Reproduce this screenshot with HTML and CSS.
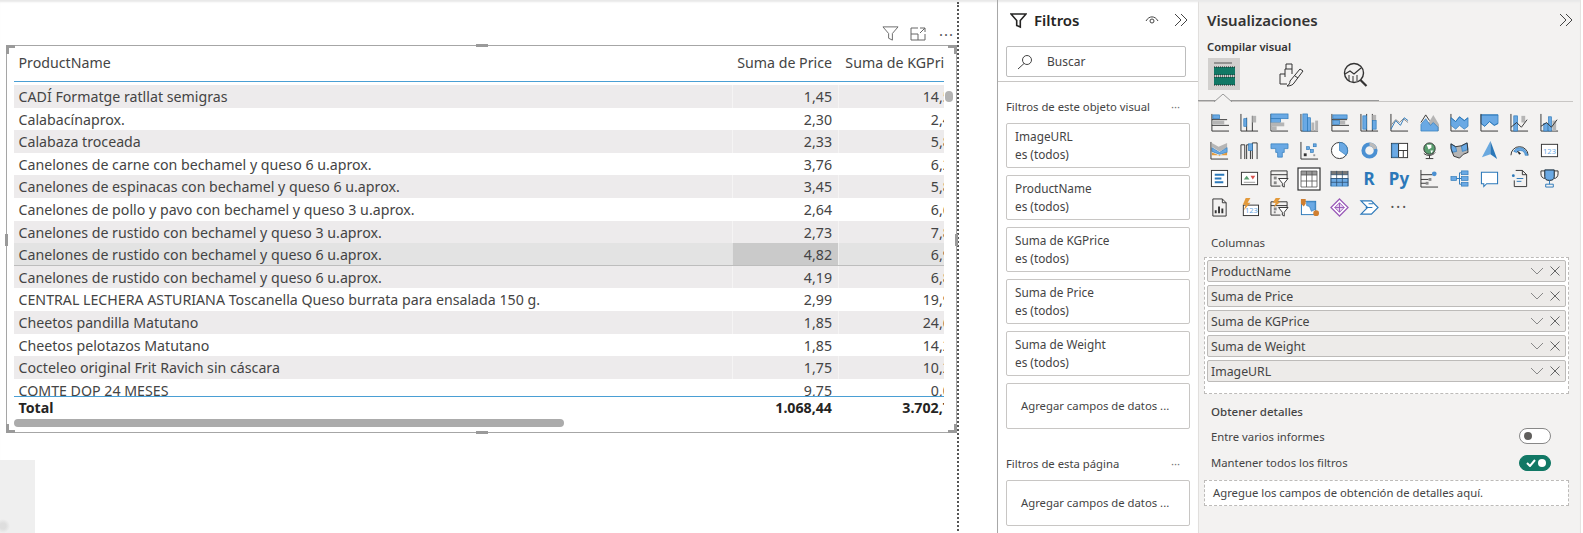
FILE: index.html
```html
<!DOCTYPE html>
<html lang="en">
<head>
  <meta charset="UTF-8" />
  <title>Power BI</title>
  <link rel="stylesheet" href="styles.css">
</head>
<body>

  <main class="canvas">
    <div class="page">
      <div class="visual-tools">
        <svg width="17" height="17" viewBox="0 0 18 18" fill="none" stroke="#666"><path d="M1 2h16l-6 7v7l-4-2V9z"/></svg>
        <svg width="16" height="14" viewBox="0 0 16 14" fill="none" stroke="#666"><path d="M8 1H1v12h14V7M1 7h7v6M10 1h5v4M15 1l-5 5"/></svg>
        <span class="tool-dots">···</span>
      </div>

      <div class="visual">
        <span class="handle corner-tl"></span>
        <span class="handle corner-tr"></span>
        <span class="handle corner-bl"></span>
        <span class="handle corner-br"></span>
        <span class="handle mid-top"></span>
        <span class="handle mid-bottom"></span>
        <span class="handle mid-left"></span>
        <span class="handle mid-right"></span>

        <div class="grid-clip">
          <div class="row head">
            <div>ProductName</div><div class="num">Suma de Price</div><div class="num">Suma de KGPrice</div>
          </div>
          <div class="rows">
            <div class="row shaded"><div>CADÍ Formatge ratllat semigras</div><div class="num">1,45</div><div class="num">14,50</div></div>
            <div class="row"><div>Calabacínaprox.</div><div class="num">2,30</div><div class="num">2,45</div></div>
            <div class="row shaded"><div>Calabaza troceada</div><div class="num">2,33</div><div class="num">5,83</div></div>
            <div class="row"><div>Canelones de carne con bechamel y queso 6 u.aprox.</div><div class="num">3,76</div><div class="num">6,27</div></div>
            <div class="row shaded"><div>Canelones de espinacas con bechamel y queso 6 u.aprox.</div><div class="num">3,45</div><div class="num">5,83</div></div>
            <div class="row"><div>Canelones de pollo y pavo con bechamel y queso 3 u.aprox.</div><div class="num">2,64</div><div class="num">6,60</div></div>
            <div class="row shaded"><div>Canelones de rustido con bechamel y queso 3 u.aprox.</div><div class="num">2,73</div><div class="num">7,80</div></div>
            <div class="row shaded lined"><div>Canelones de rustido con bechamel y queso 6 u.aprox.</div><div class="num hot">4,82</div><div class="num">6,93</div></div>
            <div class="row shaded"><div>Canelones de rustido con bechamel y queso 6 u.aprox.</div><div class="num">4,19</div><div class="num">6,83</div></div>
            <div class="row"><div>CENTRAL LECHERA ASTURIANA Toscanella Queso burrata para ensalada 150 g.</div><div class="num">2,99</div><div class="num">19,93</div></div>
            <div class="row shaded"><div>Cheetos pandilla Matutano</div><div class="num">1,85</div><div class="num">24,67</div></div>
            <div class="row"><div>Cheetos pelotazos Matutano</div><div class="num">1,85</div><div class="num">14,23</div></div>
            <div class="row shaded"><div>Cocteleo original Frit Ravich sin cáscara</div><div class="num">1,75</div><div class="num">10,29</div></div>
            <div class="row"><div>COMTE DOP 24 MESES</div><div class="num">9,75</div><div class="num">0,00</div></div>
          </div>
          <div class="row total">
            <div>Total</div><div class="num">1.068,44</div><div class="num">3.702,72</div>
          </div>
        </div>
        <div class="scroll-v"></div>
        <div class="scroll-h"></div>
      </div>

      <div class="blank-tile"></div>
    </div>
  </main>

  <aside class="filters">
    <div class="filters-top">
      <div class="pane-head">
        <svg width="17" height="17" viewBox="0 0 17 17" fill="none" stroke="#252423" stroke-width="1.6"><path d="M1 2h15l-5.700 6.600V15l-3.600-1.500V8.600z"/></svg>
        <h2>Filtros</h2>
        <svg class="eye" width="14" height="10" viewBox="0 0 14 10" fill="none" stroke="#444"><path d="M1 6c3-5.500 9-5.500 12 0"/><circle cx="7" cy="6" r="2"/></svg>
        <svg class="chev" width="14" height="14" viewBox="0 0 14 14" fill="none" stroke="#444"><path d="M1 1l6 6-6 6M7 1l6 6-6 6"/></svg>
      </div>
      <div class="search">
        <svg width="16" height="16" viewBox="0 0 16 16" fill="none" stroke="#444"><circle cx="10" cy="6" r="4.500"/><path d="M7 9.500L1 15"/></svg>
        <span>Buscar</span>
      </div>
    </div>

    <div class="filter-section">
      <div class="section-title"><span>Filtros de este objeto visual</span><span class="more">···</span></div>
      <div class="filter-card">ImageURL<br>es (todos)</div>
      <div class="filter-card">ProductName<br>es (todos)</div>
      <div class="filter-card">Suma de KGPrice<br>es (todos)</div>
      <div class="filter-card">Suma de Price<br>es (todos)</div>
      <div class="filter-card">Suma de Weight<br>es (todos)</div>
      <div class="filter-add">Agregar campos de datos ...</div>
    </div>

    <div class="filter-section page-filters">
      <div class="section-title"><span>Filtros de esta página</span><span class="more">···</span></div>
      <div class="filter-add">Agregar campos de datos ...</div>
    </div>
  </aside>

  <aside class="viz">
    <div class="viz-head">
      <h2>Visualizaciones</h2>
      <svg width="14" height="14" viewBox="0 0 14 14" fill="none" stroke="#444"><path d="M1 1l6 6-6 6M7 1l6 6-6 6"/></svg>
    </div>
    <div class="viz-sub">Compilar visual</div>

    <div class="viz-tabs">
      <div class="viz-tab active">
        <svg width="28" height="26" viewBox="0 0 28 26"><path d="M4 2h18" stroke="#555"/><rect x="4" y="6" width="21" height="8" fill="#117865"/><rect x="4" y="16" width="21" height="8" fill="#117865"/><path d="M4 6h21M4 14h21M4 16h21M4 24h21" stroke="#222" stroke-dasharray="1 1"/></svg>
      </div>
      <div class="viz-tab brush">
        <svg width="26" height="26" viewBox="0 0 26 26" fill="none" stroke="#333"><path d="M8 21H1V11h5M6 14V6h7v5M13 6V1h-6v5"/><path d="M21 6l3 2-9 12c-1 2-4 3-7 3 2-1 3-3 3-5z"/><path d="M16 13l3 2"/></svg>
      </div>
      <div class="viz-tab">
        <svg width="26" height="26" viewBox="0 0 26 26" fill="none" stroke="#333"><circle cx="11" cy="11" r="9.500" stroke-width="1.400"/><path d="M17.500 18l6 6" stroke-width="2.200"/><path d="M2 12l5-3 4 3 7-6" stroke-width="1.200"/><path d="M6 13v6M10 14v6M14 13v6"/></svg>
      </div>
    </div>

    <div class="viz-rule"><svg width="18" height="8" viewBox="0 0 18 8"><path d="M0 8L9 0l9 8" fill="#f3f2f1" stroke="#999"/></svg></div>

    <div class="icon-grid">
      <svg viewBox="0 0 20 20"><path class="ax" d="M2 1v18h18M2 7h16M2 13h18"/><rect class="bl" x="3" y="2" width="7" height="4"/><rect class="gy" x="3" y="8" width="12" height="4"/></svg>
      <svg viewBox="0 0 20 20"><path class="ax" d="M1 1v18h18M7 5v14M13 3v16"/><rect class="bl" x="4" y="6" width="3" height="8"/><rect class="gy" x="13" y="3" width="4" height="7"/></svg>
      <svg viewBox="0 0 20 20"><path class="ax" d="M1 1v18h18"/><rect class="bl" x="1" y="1" width="18" height="5"/><rect class="bl" x="1" y="6" width="10" height="4"/><rect class="gy" x="1" y="10" width="14" height="4"/><rect class="gy" x="1" y="14" width="6" height="4"/></svg>
      <svg viewBox="0 0 20 20"><path class="ax" d="M1 1v18h18"/><rect class="bl" x="3" y="1" width="5" height="18"/><rect class="bl" x="8" y="5" width="3" height="14"/><rect class="gy" x="12" y="10" width="3" height="9"/><rect class="gy" x="16" y="8" width="3" height="11"/></svg>
      <svg viewBox="0 0 20 20"><path class="ax" d="M2 1v18h18M2 7h16M2 13h18"/><rect class="bl" x="3" y="2" width="15" height="4"/><rect class="gy" x="10" y="8" width="6" height="4"/><rect class="bl" x="3" y="8" width="7" height="4"/></svg>
      <svg viewBox="0 0 20 20"><path class="ax" d="M1 1v18h18M7 1v18M13 1v18"/><rect class="bl" x="3" y="3" width="4" height="14"/><rect class="gy" x="13" y="2" width="4" height="6"/><rect class="bl" x="13" y="8" width="4" height="9"/></svg>
      <svg viewBox="0 0 20 20"><path class="ax" d="M1 1v18h18"/><path class="ln" d="M1 13l5-6 4 3 4-4 5 4"/><path class="ln2" d="M1 17l5-9 5 5 4-8 4 3"/></svg>
      <svg viewBox="0 0 20 20"><path class="gy" d="M8 12l6-10 6 10v7H8z"/><path class="bl" d="M1 19V12l5-6 5 7 3-3 5 5v4z"/><path class="ax" d="M1 10l5-8 4 6"/></svg>
      <svg viewBox="0 0 20 20"><path class="ax" d="M1 1v18h18"/><path class="bl" d="M1 5l5 4 4-5 5 4 4-3v9l-4 3-5-4-4 4-5-4z"/><path class="ln2" d="M1 5l5 4 4-5 5 4 4-3"/></svg>
      <svg viewBox="0 0 20 20"><path class="bl" d="M1 2h18v9l-4 2-5-4-5 5-4-3z"/><path class="ln2" d="M1 2h18M1 11l4 3 5-5 5 4 4-2"/><path class="ax" d="M1 1v18h18"/></svg>
      <svg viewBox="0 0 20 20"><path class="ax" d="M1 1v18h18"/><rect class="bl" x="4" y="3" width="4" height="16"/><rect class="gy" x="12" y="3" width="4" height="7"/><path class="ax" d="M1 15l6-5 5 5 6-8"/></svg>
      <svg viewBox="0 0 20 20"><path class="ax" d="M1 1v18h18"/><rect class="bl" x="4" y="11" width="4" height="8"/><rect class="bl" x="9" y="4" width="3" height="15"/><rect class="gy" x="13" y="8" width="4" height="11"/><path class="ax" d="M1 14l6-4 5 5 6-8"/></svg>

      <svg viewBox="0 0 20 20"><path class="gy" d="M2 2l7 4 9-4v5l-8 4-8-5z"/><path class="bl" d="M2 7l8 5 8-5v5l-8 2-8-3z"/><path fill="#e39a3b" d="M2 12l5 2 3 2 3-2 5-2v3H2z"/><path class="ax" d="M1 1v18h18"/></svg>
      <svg viewBox="0 0 20 20"><path class="ax" d="M1 19V4h4v15M7 19V4M7 4h4v4M13 19V2h5v17M11 19V8"/><rect class="bl" x="9" y="3" width="4" height="7"/></svg>
      <svg viewBox="0 0 20 20"><path class="bl" d="M1 3h18v5H15v4h-2v5H8v-5H6V8H1z"/></svg>
      <svg viewBox="0 0 20 20"><path class="ax" d="M1 1v18h18"/><rect x="4" y="13" width="3" height="3" fill="#333"/><rect class="bl" x="7" y="6" width="3" height="3"/><rect class="bl" x="11" y="9" width="3" height="3"/><rect class="bl" x="14" y="3" width="3" height="3"/><rect x="14" y="14" width="2" height="2" fill="#999"/></svg>
      <svg viewBox="0 0 20 20"><circle cx="10" cy="10" r="8.500" fill="#fff" stroke="#333"/><path class="bl" d="M10 10V1.500A8.500 8.500 0 0 1 17 15z"/></svg>
      <svg viewBox="0 0 20 20"><circle cx="10" cy="10" r="6.500" fill="none" stroke="#4a90d2" stroke-width="4"/><path d="M10 1.500A8.500 8.500 0 0 1 18 8L14 9A5 5 0 0 0 10 5z" fill="#bbb"/></svg>
      <svg viewBox="0 0 20 20"><rect x="1.500" y="2.500" width="17" height="15" fill="#fff" stroke="#333"/><rect class="bl" x="2" y="3" width="7" height="14"/><path class="ax" d="M9 3v14M9 10h9M14 10v7"/></svg>
      <svg viewBox="0 0 20 20"><circle cx="10" cy="8" r="6" fill="#5a9e6f" stroke="#333"/><path d="M7 4h5v3l-3 2zM11 10h3l-2 3z" fill="#fff"/><path class="ax" d="M4 13c3 3 9 3 12-1M10 15v3M6 18.500h8"/></svg>
      <svg viewBox="0 0 20 20"><path class="gy" d="M1 3l5 3 6-1 6-3 1 10-5 2-4 4-6-2-3-8z"/><path class="bl" d="M1 3l5 3 1 5-5 1zM12 5l6-3 1 7-6 2z"/><path class="ax" d="M1 3l5 3 6-1 6-3 1 10-5 2-4 4-6-2-3-8z"/></svg>
      <svg viewBox="0 0 20 20"><path d="M11 0L2 17l9-3z" fill="#6aa9df"/><path d="M11 0l7 19-7-5z" fill="#2b78b9"/></svg>
      <svg viewBox="0 0 20 20"><path d="M1 15a9 9 0 0 1 18 0" fill="none" stroke="#333" stroke-width="1"/><path class="bl" d="M4 11a7 7 0 0 1 12-1l3 5h-3a6 6 0 0 0-1-3 5 5 0 0 0-8 0z"/><path d="M10 14l-2-3 3 2z" stroke="#333"/></svg>
      <svg viewBox="0 0 20 20"><rect x="1.500" y="3.500" width="17" height="13" fill="#fff" stroke="#333"/><text class="mini-num" x="10" y="13.500">123</text></svg>

      <svg viewBox="0 0 20 20"><rect x="1.500" y="1.500" width="17" height="17" fill="#fff" stroke="#333"/><path d="M5 6h10M5 10h7M5 14h9" stroke="#2b78b9" stroke-width="2"/></svg>
      <svg viewBox="0 0 20 20"><rect x="1.500" y="3.500" width="17" height="13" fill="#fff" stroke="#333"/><path d="M7 7l3 4H4z" fill="#5a9e6f"/><path d="M11 7h5l-2.500 4z" fill="#d9534f"/><path d="M4 14h12" stroke="#999"/></svg>
      <svg viewBox="0 0 20 20"><path class="ax" d="M11 18H1V2h17v8M1 6h17"/><rect x="4" y="8" width="3" height="3" fill="#888"/><rect x="4" y="13" width="3" height="3" fill="#888"/><path d="M9 10h10l-4 5v4l-2-1v-3z" fill="#fff" stroke="#333"/></svg>
      <svg class="tbl-on" viewBox="0 0 24 24"><rect x="1" y="1" width="22" height="22" fill="#fff" stroke="#333" stroke-width="1.200"/><rect x="4" y="4" width="16" height="4" fill="#999"/><path d="M4 4h16v16H4zM4 8h16M4 14h16M9.500 4v16M15 4v16" fill="none" stroke="#555" stroke-width=".8"/></svg>
      <svg viewBox="0 0 20 20"><rect x="1" y="2" width="18" height="16" fill="#fff"/><rect class="bl" x="1" y="10" width="18" height="8"/><rect x="1" y="2" width="18" height="4" fill="#777"/><path d="M1 6h18M1 10h18M1 14h18M7 2v16M13 2v16M1 2v16M19 2v16" fill="none" stroke="#2d4d6d" stroke-width=".8"/></svg>
      <span class="glyph-r">R</span>
      <span class="glyph-py">Py</span>
      <svg viewBox="0 0 20 20"><path class="ax" d="M1 1v18h18M1 6h12M1 11h8M1 15h6"/><circle cx="15" cy="5" r="2.500" fill="#4a90d2"/><rect x="9" y="9.500" width="3" height="3" fill="#888"/><rect x="6" y="13.500" width="3" height="3" fill="#888"/></svg>
      <svg viewBox="0 0 20 20"><rect class="bl" x="1" y="8" width="6" height="4" stroke="#2b78b9"/><rect class="bl" x="12" y="2" width="7" height="4"/><rect class="bl" x="12" y="8" width="7" height="4"/><rect class="bl" x="12" y="14" width="7" height="4"/><path d="M7 10h5M10 4h2M10 16h2M10 4v12" stroke="#2b78b9" fill="none"/></svg>
      <svg viewBox="0 0 20 20"><path d="M1.500 3.500h17v12H7l-3 3v-3H1.500z" fill="#fff" stroke="#2b78b9" stroke-width="1.100"/></svg>
      <svg viewBox="0 0 20 20"><path class="ax" d="M6 1.500h7l4.500 4.500v12.500h-13V12M13 1.500V6h4.500"/><circle cx="3.500" cy="7" r="1.500" fill="#2b78b9"/><path d="M7 10h7M7 13h5" stroke="#2b78b9"/></svg>
      <svg viewBox="0 0 20 20"><path class="ax" d="M5 2H1v3c0 3 2 5 4 5M15 2h4v3c0 3-2 5-4 5"/><path class="bl" d="M5 1h10v7c0 3-2 4-5 4s-5-1-5-4z"/><path class="ax" d="M5 1h10v7c0 3-2 4-5 4s-5-1-5-4z"/><path d="M10 12v4M6 16h8v3H6z" fill="none" stroke="#2b78b9"/></svg>

      <svg viewBox="0 0 20 20"><path class="ax" d="M3 1h10l4 4v14H3zM13 1v4h4"/><path d="M6 16v-3M9.500 16V9M13 16v-5" stroke="#333" stroke-width="2"/></svg>
      <svg viewBox="0 0 20 20"><rect x="3.500" y="7.500" width="16" height="11" fill="#fff" stroke="#333"/><text class="mini-num" x="12" y="16">123</text><path d="M6 0h5L8 5h3L4 13l2-6H3z" fill="#e39a3b"/></svg>
      <svg viewBox="0 0 20 20"><path class="ax" d="M11 18H1V4h17v6M1 8h17"/><rect x="4" y="10" width="3" height="3" fill="#888"/><rect x="4" y="14" width="2" height="2" fill="#888"/><path d="M9 10h10l-4 5v4l-2-1v-3z" fill="#fff" stroke="#333"/><path d="M6 0h5L8 4h3L4 10l2-5H3z" fill="#e39a3b"/></svg>
      <svg viewBox="0 0 20 20"><rect x="1.500" y="3.500" width="15" height="14" fill="#fff" stroke="#2b78b9"/><path class="bl" d="M7 4h9v8l-4 2-2-5-3-1z"/><path d="M1 1h5v5l-2 3-3-3z" fill="#d07f30"/><circle cx="17" cy="16" r="3" fill="#d07f30"/></svg>
      <svg viewBox="0 0 20 20"><path d="M10 1l9 9-9 9-9-9z" fill="#fff" stroke="#9a5ab8" stroke-width="1.300"/><path d="M10 5l5 5-5 5-5-5z" fill="#e7d5ef" stroke="#9a5ab8"/><path d="M5 10h10M10 5v10" stroke="#9a5ab8"/></svg>
      <svg viewBox="0 0 20 20"><path d="M1 3h11l7 7-7 7H1l7-7z" fill="#fff" stroke="#2b78b9" stroke-width="1.200"/><path d="M6 10h7M9 6h5" stroke="#2b78b9" stroke-width="1.200"/></svg>
      <span class="grid-dots">···</span>
    </div>

    <div class="viz-label label-cols">Columnas</div>
    <div class="well">
      <div class="chip"><span>ProductName</span><svg width="14" height="8" viewBox="0 0 14 8" fill="none" stroke="#888"><path d="M1 1l6 6 6-6"/></svg><svg width="10" height="10" viewBox="0 0 10 10" stroke="#666"><path d="M.5.500l9 9M9.500.500l-9 9"/></svg></div>
      <div class="chip"><span>Suma de Price</span><svg width="14" height="8" viewBox="0 0 14 8" fill="none" stroke="#888"><path d="M1 1l6 6 6-6"/></svg><svg width="10" height="10" viewBox="0 0 10 10" stroke="#666"><path d="M.5.500l9 9M9.500.500l-9 9"/></svg></div>
      <div class="chip"><span>Suma de KGPrice</span><svg width="14" height="8" viewBox="0 0 14 8" fill="none" stroke="#888"><path d="M1 1l6 6 6-6"/></svg><svg width="10" height="10" viewBox="0 0 10 10" stroke="#666"><path d="M.5.500l9 9M9.500.500l-9 9"/></svg></div>
      <div class="chip"><span>Suma de Weight</span><svg width="14" height="8" viewBox="0 0 14 8" fill="none" stroke="#888"><path d="M1 1l6 6 6-6"/></svg><svg width="10" height="10" viewBox="0 0 10 10" stroke="#666"><path d="M.5.500l9 9M9.500.500l-9 9"/></svg></div>
      <div class="chip"><span>ImageURL</span><svg width="14" height="8" viewBox="0 0 14 8" fill="none" stroke="#888"><path d="M1 1l6 6 6-6"/></svg><svg width="10" height="10" viewBox="0 0 10 10" stroke="#666"><path d="M.5.500l9 9M9.500.500l-9 9"/></svg></div>
    </div>

    <div class="viz-label label-drill">Obtener detalles</div>
    <div class="toggle-row"><span>Entre varios informes</span><span class="toggle"></span></div>
    <div class="toggle-row"><span>Mantener todos los filtros</span>
      <span class="toggle on"><svg width="10" height="8" viewBox="0 0 10 8" fill="none" stroke="#fff" stroke-width="2"><path d="M1 4l3 3 5-6"/></svg></span>
    </div>
    <div class="drill-well">Agregue los campos de obtención de detalles aquí.</div>
  </aside>

  <div class="edge"><span class="edge-tab"></span></div>

</body>
</html>
```

FILE: styles.css
```css
* {
  margin: 0;
  padding: 0;
  box-sizing: border-box;
  font-family: "Noto Sans", "Open Sans", sans-serif;
}

body {
  display: flex;
  height: 533px;
  overflow: hidden;
  background: #fff;
  color: #444;
  font-size: 12px;
}

/* report canvas */
.canvas {
  flex: 0 0 998px;
  height: 100%;
  padding-right: 38px;
  border-right: 1px solid #a8a8a8;
  box-shadow: inset 0 3px 2px -1px #e8e8e8;
}

.page {
  height: 100%;
  border-right: 2px dotted #555;
  margin-top: 2px;
}

.visual-tools {
  display: flex;
  align-items: center;
  justify-content: flex-end;
  gap: 11px;
  height: 43px;
  padding: 20px 3px 0 0;
}

.tool-dots {
  margin-left: 2px;
  font-size: 15px;
  letter-spacing: 1px;
  color: #555;
}

.visual {
  position: relative;
  margin-left: 6px;
  height: 388px;
  width: 951px;
  border: 1px solid #a6a6a6;
  padding-left: 7px;
}

.grid-clip {
  width: 930px;
  overflow: hidden;
}

.row {
  display: grid;
  grid-template-columns: 718px 106px 127px;
  width: 951px;
  height: 22.6px;
  font-size: 14.2px;
  color: #444;
  white-space: nowrap;
}

.row > div {
  padding: 1px 6px 0 4.500px;
  line-height: 22px;
  overflow: hidden;
}

.row .num {
  text-align: right;
  padding-left: 0;
  border-left: 1px solid rgba(255, 255, 255, .45);
}

.head {
  height: 36px;
  border-bottom: 1px solid #4a9fd4;
}

.head > div {
  padding-top: 0;
  line-height: 34px;
}

.rows {
  height: 311px;
  margin-top: 3px;
  overflow: hidden;
}

.shaded {
  background: #edebec;
}

.lined {
  background: #e3e3e3;
  border-bottom: 1px solid #bdbdbd;
}

.hot {
  background: #cacaca;
}

.total {
  height: 23px;
  border-top: 1px solid #4a9fd4;
  font-weight: 700;
  color: #252423;
}

.row.total > div {
  padding-top: 0;
}

.total .num {
  border-left: 0;
}

.scroll-v {
  position: absolute;
  top: 45px;
  left: 938px;
  width: 8px;
  height: 11px;
  border-radius: 4px;
  background: #b3b3b3;
}

.scroll-h {
  height: 8px;
  width: 550px;
  border-radius: 4px;
  background: #ababab;
}

.handle {
  position: absolute;
  background: #9a9a9a;
}

.mid-top, .mid-bottom {
  left: 469px;
  width: 12px;
  height: 3px;
}

.mid-top { top: -2px; }
.mid-bottom { bottom: -2px; }

.mid-left, .mid-right {
  top: 188px;
  width: 3px;
  height: 12px;
}

.mid-left { left: -2px; }
.mid-right { right: -2px; }

.corner-tl, .corner-tr, .corner-bl, .corner-br {
  width: 9px;
  height: 9px;
  background: none;
  border: 3px solid #9a9a9a;
}

.corner-tl { top: -1px; left: -1px; border-right: 0; border-bottom: 0; }
.corner-tr { top: -1px; right: -1px; border-left: 0; border-bottom: 0; }
.corner-bl { bottom: -1px; left: -1px; border-right: 0; border-top: 0; }
.corner-br { bottom: -1px; right: -1px; border-left: 0; border-top: 0; }

.blank-tile {
  width: 35px;
  height: 90px;
  margin-top: 27px;
  background: radial-gradient(circle at 3px 66px, #dedede 0, #dedede 3px, #efefef 7px);
}

/* filters pane */
.filters {
  flex: 0 0 200px;
  height: 100%;
  background: #fff;
  box-shadow: inset 0 3px 2px -1px #e8e8e8;
}

.filters-top {
  height: 82px;
  padding: 0 12px 0 8px;
  border-bottom: 1px solid #c8c6c4;
}

.pane-head {
  display: flex;
  align-items: center;
  height: 46px;
  padding: 0 0 6px 4px;
}

.pane-head h2 {
  margin-left: 7px;
  font-size: 15px;
  font-weight: 600;
  color: #252423;
}

.eye {
  margin-left: auto;
}

.chev {
  margin-left: 15px;
  margin-right: -2px;
}

.search {
  display: flex;
  align-items: center;
  gap: 14px;
  height: 31px;
  padding-left: 10px;
  border: 1px solid #bdbdbd;
  border-radius: 2px;
}

.filter-section {
  padding: 0 8px;
}

.section-title {
  display: flex;
  justify-content: space-between;
  height: 41px;
  padding: 15px 10px 0 0;
  line-height: 20px;
  font-size: 11.300px;
}

.more {
  color: #777;
}

.filter-card {
  height: 45px;
  margin-bottom: 7px;
  padding: 3px 0 0 8px;
  border: 1px solid #c8c6c4;
  border-radius: 2px;
  line-height: 18px;
  font-size: 11.800px;
}

.filter-add {
  height: 46px;
  line-height: 44px;
  padding-left: 14px;
  border: 1px solid #c8c6c4;
  border-radius: 2px;
  font-size: 11.300px;
}

.page-filters {
  margin-top: 10px;
}

/* visualizations pane */
.viz {
  flex: 0 0 376px;
  height: 100%;
  padding: 0 7px 0 9px;
  background: #f3f2f1;
  border-right: 1px solid #e5e3e1;
  box-shadow: inset 0 3px 2px -1px #e8e8e8, inset 1px 0 0 #e1dfdd;
}

.viz-head {
  display: flex;
  justify-content: space-between;
  align-items: center;
  height: 39px;
  padding: 0;
}

.viz-head h2 {
  font-size: 15px;
  font-weight: 600;
  color: #333;
}

.viz-sub {
  height: 19px;
  line-height: 16px;
  font-weight: 600;
  font-size: 11.200px;
  color: #333;
}

.viz-tabs {
  display: flex;
  gap: 34px;
  height: 32px;
  margin-left: 1px;
}

.viz-tab {
  display: flex;
  align-items: center;
  justify-content: center;
  width: 32px;
  height: 32px;
  padding-top: 2px;
}

.viz-tab.brush {
  padding: 3px 0 0 3px;
}

.viz-tab.active {
  background: #d2d0ce;
  padding-top: 0;
}

.viz-rule {
  position: relative;
  height: 12px;
  margin: 0 0 0 -9px;
  width: 375px;
  border-bottom: 1px solid #c8c6c4;
  background: linear-gradient(#999, #999) 0 100% / 181px 1px no-repeat;
}

.viz-rule svg {
  position: absolute;
  left: 16px;
  bottom: -1px;
}

.icon-grid {
  display: grid;
  grid-template-columns: repeat(12, 30px);
  grid-auto-rows: 28.300px;
  align-items: center;
  justify-items: center;
  margin: 6px 0 0 -3px;
}

.icon-grid svg {
  width: 19px;
  height: 19px;
  overflow: visible;
}

.icon-grid svg.tbl-on {
  width: 24px;
  height: 24px;
}

.ax {
  fill: none;
  stroke: #333;
  stroke-width: 1;
}

.bl {
  fill: #6aa9e4;
  stroke: #2b78b9;
  stroke-width: .7;
}

.gy {
  fill: #b5b5b5;
}

.ln {
  fill: none;
  stroke: #888;
}

.ln2 {
  fill: none;
  stroke: #2b78b9;
}

.mini-num {
  font-size: 8px;
  fill: #6aa9e4;
  text-anchor: middle;
}

.glyph-r, .glyph-py {
  font-size: 17px;
  font-weight: 700;
  color: #2b78b9;
  line-height: 1;
}

.grid-dots {
  font-size: 16px;
  letter-spacing: 1.500px;
  color: #555;
}

.viz-label {
  padding-left: 4px;
}

.label-cols {
  margin-top: 13px;
  height: 23px;
  line-height: 18px;
  font-size: 11.500px;
}

.well {
  display: flex;
  flex-direction: column;
  gap: 3px;
  width: 365px;
  height: 137px;
  margin-left: -3px;
  padding: 2px 2px 0 2px;
  background: #fff;
  border: 1px dashed #bdbbb9;
}

.chip {
  display: flex;
  align-items: center;
  gap: 6px;
  height: 22px;
  padding: 0 5px 0 3px;
  background: #edebe9;
  border: 1px solid #bdbbb9;
  border-radius: 2px;
  font-size: 12.300px;
}

.chip span {
  flex: 1;
}

.label-drill {
  margin-top: 8px;
  height: 21px;
  line-height: 20px;
  font-size: 11.500px;
  font-weight: 500;
}

.toggle-row {
  display: flex;
  align-items: center;
  justify-content: space-between;
  height: 26.500px;
  padding: 0 22px 0 4px;
  font-size: 11.300px;
}

.toggle {
  position: relative;
  display: block;
  width: 32px;
  height: 16px;
  background: #fff;
  border: 1px solid #888;
  border-radius: 8px;
}

.toggle::after {
  content: "";
  position: absolute;
  top: 3px;
  left: 4px;
  width: 8px;
  height: 8px;
  border-radius: 50%;
  background: #605e5c;
}

.toggle.on {
  background: #117865;
  border-color: #117865;
}

.toggle.on::after {
  left: auto;
  right: 4px;
  background: #fff;
}

.toggle.on svg {
  position: absolute;
  top: 3px;
  left: 6px;
}

.drill-well {
  width: 365px;
  height: 26px;
  margin: 4px 0 0 -3px;
  padding-left: 8px;
  line-height: 24px;
  background: #fff;
  border: 1px dashed #bdbbb9;
  font-size: 11.300px;
}

.edge {
  flex: 1;
  padding-top: 47px;
}

.edge-tab {
  display: block;
  width: 8px;
  height: 22px;
  margin-left: 6px;
  border: 1px solid #c8c6c4;
  border-radius: 3px;
}
```
